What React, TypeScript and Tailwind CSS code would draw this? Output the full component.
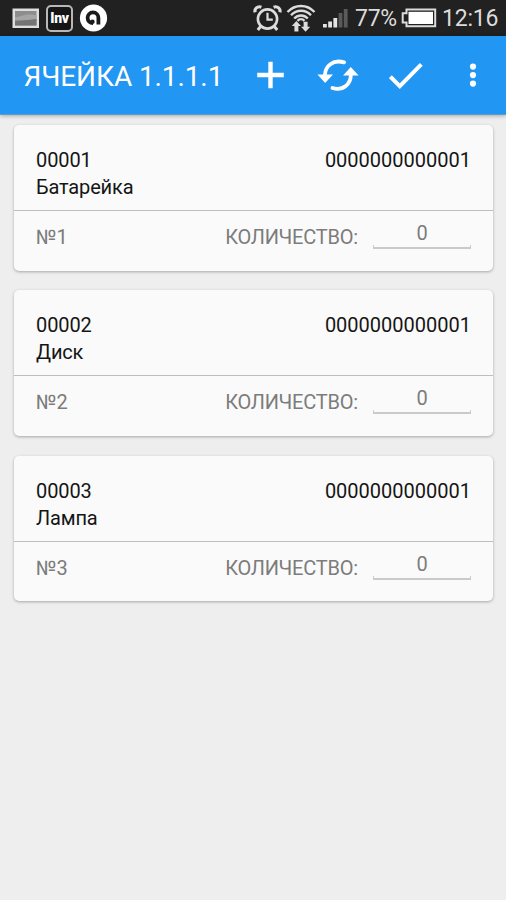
const items = [
  { code: "00001", name: "Батарейка", barcode: "0000000000001", number: 1, count: 0 },
  { code: "00002", name: "Диск", barcode: "0000000000001", number: 2, count: 0 },
  { code: "00003", name: "Лампа", barcode: "0000000000001", number: 3, count: 0 },
];

function StatusBar() {
  return (
    <div className="flex h-9 items-center bg-[#212121] pl-3 text-[#dcdcdc]">
      <svg width="28" height="22" viewBox="0 0 28 22">
        <rect x=".5" y="1.5" width="26.5" height="19.5" fill="#dedede" />
        <rect x="3" y="4" width="21.5" height="14.5" fill="#8d8d8d" />
        <path d="M3 10c6 0 8-2.5 14-2.5 3 0 5 .5 7.5.5v5H3z" fill="#a5a5a5" />
        <path d="M3 14.5 24.5 12v6.5H3z" fill="#747474" />
      </svg>
      <div className="ml-1.5 flex h-[27px] w-[27px] items-center justify-center rounded-[5px] border-2 border-[#b8b8b8] bg-[#161616] text-[14px] leading-none font-black tracking-[-0.3px] text-white">
        Inv
      </div>
      <svg className="ml-1.5" width="29" height="28" viewBox="0 0 29 28">
        <circle cx="14.5" cy="14" r="13.6" fill="#fff" />
        <path d="M14 19.2a5.4 5.4 0 1 1 5.4-5.4v6.7" fill="none" stroke="#1b1b1b" strokeWidth="3.8" />
        <circle cx="13.4" cy="17.8" r="2.3" fill="#1b1b1b" />
      </svg>

      <svg className="ml-[145px]" width="29" height="28" viewBox="0 0 29 28" fill="none" stroke="#dcdcdc">
        <circle cx="14.5" cy="15" r="9.6" strokeWidth="2.6" />
        <path d="M14.5 8.8v6.8h5.3" strokeWidth="2.2" />
        <path d="m8 22-3.2 4M21 22l3.2 4" strokeWidth="3" />
        <path d="M2.2 8.2C1 5 4.5 1.6 8.4 3.2M26.8 8.2C28 5 24.5 1.6 20.6 3.2" strokeWidth="3.2" />
      </svg>
      <svg className="ml-1" width="30" height="30" viewBox="0 0 30 30" fill="none" stroke="#dcdcdc">
        <path d="M1.5 9C9 .9 21 .9 28.5 9M5 12.3c5.6-6 14.4-6 20 0M8.2 15.5c3.8-4 9.8-4 13.6 0" strokeWidth="2.4" />
        <path d="M11.5 17.8c2-2 5-2 7 0" strokeWidth="2.4" />
        <path d="m10.4 18 4.6 5h-2.6v5.5h-4V23H5.8zM19.6 28.7l-4.6-5h2.6v-5h4v5h2.6z" fill="#dcdcdc" stroke="none" />
      </svg>
      <svg className="ml-1.5" width="26" height="20" viewBox="0 0 26 20">
        <path d="M1 16h3.8v3.5H1zM6.2 13.5H10v6H6.2zM11.4 10h3.8v9.5h-3.8z" fill="#e4e4e4" />
        <path d="M16.6 5h3.8v14.5h-3.8zM21.8 1h3.8v18.500h-3.8z" fill="#5a5a5a" />
      </svg>
      <span className="ml-[7px] w-[44px] pt-0.5 text-[23px] leading-9 tracking-[-0.3px] whitespace-nowrap">77%</span>
      <svg className="ml-0.5" width="36" height="20" viewBox="0 0 36 20">
        <path d="M5.5 1.5h28.7v16.8H5.500v-3.8H1.7V5.300h3.8z" fill="none" stroke="#dcdcdc" strokeWidth="2" />
        <rect x="7.5" y="3.8" width="24.5" height="12.2" fill="#fff" />
      </svg>
      <span className="ml-[5px] pt-0.5 text-[23px] leading-9 tracking-[-0.2px]">12:16</span>
    </div>
  );
}

function Toolbar() {
  return (
    <header className="relative flex h-[79px] items-center border-b border-[#5b9dca] bg-[#2196f3] pl-[23.5px] text-white shadow-[0_1px_4px_rgba(0,0,0,0.3)]">
      <h1 className="w-[232.5px] pt-[3px] text-[28px] leading-none tracking-[-0.1px] whitespace-nowrap">ЯЧЕЙКА 1.1.1.1</h1>
      <button aria-label="Добавить">
        <svg width="28" height="28" viewBox="0 0 28 28" stroke="#fff" strokeWidth="4.4">
          <path d="M14.5.7v26.6M1.2 14h26.6" />
        </svg>
      </button>
      <button aria-label="Обновить" className="ml-[33px]">
        <svg width="42" height="34" viewBox="0 0 42 34" fill="none" stroke="#fff" strokeWidth="3.8" strokeLinecap="round">
          <path d="M27 4.4C16.500 1 7.500 8 8 18" />
          <path d="M15.500 30C26 33.200 34.300 26 33.800 16" />
          <path d="M.4 16.500h15.600l-7.800 8.500zM26 17.500h15.600l-7.800-8.500z" fill="#fff" stroke="none" />
        </svg>
      </button>
      <button aria-label="Готово" className="ml-[30px]">
        <svg width="34" height="28" viewBox="0 0 34 28" fill="none" stroke="#fff" strokeWidth="4">
          <path d="m1.4 15.7 9.4 9.4L32.3 3.3" />
        </svg>
      </button>
      <button aria-label="Меню" className="ml-[46px]">
        <svg width="8" height="26" viewBox="0 0 8 26" fill="#fff">
          <circle cx="4" cy="4.6" r="3.1" />
          <circle cx="4" cy="13.1" r="3.1" />
          <circle cx="4" cy="21.6" r="3.1" />
        </svg>
      </button>
    </header>
  );
}

function ItemCard({ item }: { item: (typeof items)[number] }) {
  return (
    <div className="h-[145.5px] rounded-[5px] bg-[#fafafa] text-[20px] leading-[27px] shadow-[0_1px_3px_rgba(0,0,0,0.3)]">
      <div className="h-[86px] border-b border-[#bdbdbd] px-[22px] pt-[22px] text-[#151515]">
        <div className="flex justify-between">
          <span className="tracking-[-0.1px]">{item.code}</span>
          <span>{item.barcode}</span>
        </div>
        <div className="tracking-[-0.15px]">{item.name}</div>
      </div>
      <div className="flex pt-[13px] pl-[22px] text-[#7c7c7c]">
        <span>№{item.number}</span>
        <span className="mr-[15px] ml-auto tracking-[-0.2px]">КОЛИЧЕСТВО:</span>
        <div className="mr-[22px] -mt-1 flex h-[31px] w-[98px] flex-col text-center">
          <span>{item.count}</span>
          <div className="mt-[-2px] h-1 shrink-0 border-x border-b-2 border-[#cacaca]" />
        </div>
      </div>
    </div>
  );
}

export default function App() {
  return (
    <div className="h-[900px] w-[506px] overflow-hidden bg-[#eeeeee] font-['Roboto',sans-serif]">
      <StatusBar />
      <Toolbar />
      <main className="flex flex-col gap-[19.8px] pt-[10px] pr-[13px] pl-[14px]">
        {items.map((item) => (
          <ItemCard key={item.code} item={item} />
        ))}
      </main>
    </div>
  );
}
